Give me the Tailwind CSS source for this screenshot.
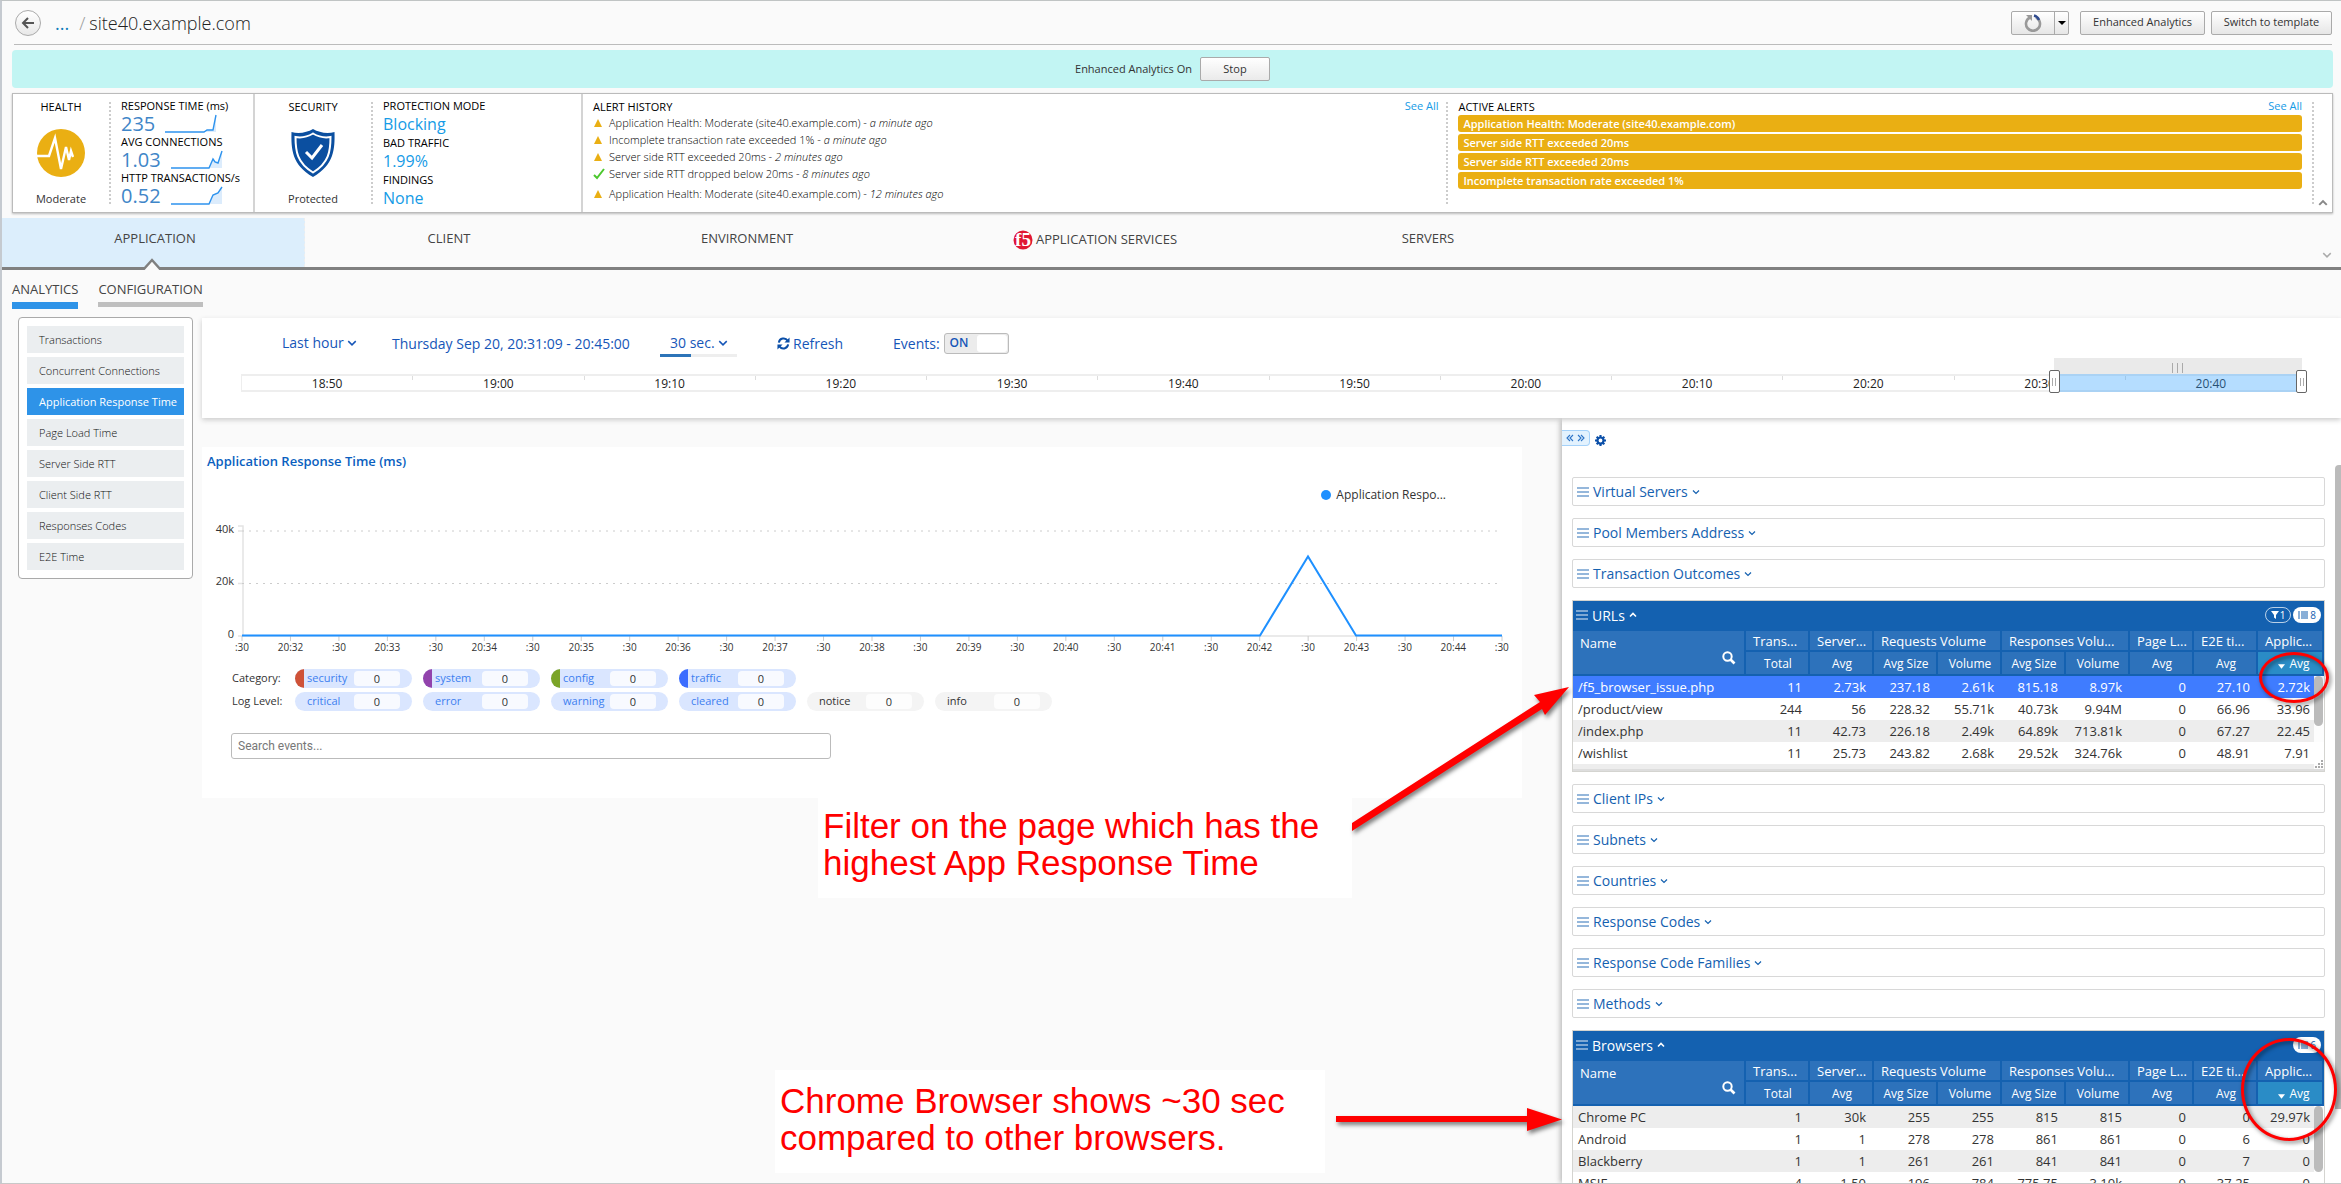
<!DOCTYPE html>
<html lang="en">
<head>
<meta charset="utf-8">
<title>site40.example.com</title>
<script src="https://cdn.jsdelivr.net/npm/@tailwindcss/browser@4"></script>
</head>
<body class="font-['Open_Sans',sans-serif] bg-[#fafafa] text-[#333]">
<svg class="hidden">
  <symbol id="down" viewBox="0 0 8 8"><path d="M1 2.5 4 5.5 7 2.5" fill="none" stroke="currentColor" stroke-width="1.2"/></symbol>
  <symbol id="up" viewBox="0 0 8 8"><path d="M1 5.5 4 2.5 7 5.5" fill="none" stroke="currentColor" stroke-width="1.6"/></symbol>
  <symbol id="bars" viewBox="0 0 12 10"><path d="M0 1h12M0 5h12M0 9h12" stroke="currentColor" stroke-width="1.7"/></symbol>
  <symbol id="search" viewBox="0 0 14 14"><circle cx="5.5" cy="5.5" r="4.2" fill="none" stroke="currentColor" stroke-width="2"/><path d="M8.5 8.5 12.5 12.5" stroke="currentColor" stroke-width="2.6"/></symbol>
  <symbol id="list" viewBox="0 0 10 8"><path d="M0 1h2M3 1h7M0 3h2M3 3h7M0 5h2M3 5h7M0 7h2M3 7h7" stroke="currentColor" stroke-width="1.2"/></symbol>
</svg>

<div class="relative h-screen flex flex-col overflow-hidden border-t border-b border-t-[#c0c4c4] border-b-[#c8c8c8] border-l-2 border-l-[#c5cad0]">

  <header class="ml-3 mr-[9px] h-[44px] shrink-0 flex items-center border-b border-[#bbb]">
    <button aria-label="Back" class="ml-px size-[26px] rounded-full border border-[#aaa] bg-gradient-to-b from-white to-[#e8e8e8] flex items-center justify-center">
      <svg class="size-[14px]" viewBox="0 0 14 14"><path d="M13 7H2M7 2 2 7l5 5" fill="none" stroke="#555" stroke-width="2"/></svg>
    </button>
    <a href="#" class="ml-[14px] text-[18px] leading-6 text-[#0f7cba]">...</a>
    <span class="ml-[10px] text-[18px] leading-6 font-light text-[#999]">/</span>
    <h1 class="ml-1 text-[18px] leading-6 font-light text-[#222]">site40.example.com</h1>
    <div class="ml-auto flex items-center">
      <div class="flex h-6 border border-[#aaa] rounded-[2px] bg-gradient-to-b from-white to-[#e6e6e6]">
        <button aria-label="Refresh" class="w-[43px] flex items-center justify-center border-r border-[#aaa]">
          <svg class="size-[18px]" viewBox="0 0 18 18"><path d="M6 3.5A7 7 0 1 0 12 3.5" fill="none" stroke="#999" stroke-width="2.6"/><path d="M10 1.5A7.5 7.5 0 0 1 15 6" fill="none" stroke="#2f4b8f" stroke-width="2.4"/><path d="M2 1h6v6z" fill="#999"/></svg>
        </button>
        <button aria-label="Refresh options" class="w-[13px] flex items-center justify-center">
          <svg class="w-2 h-1" viewBox="0 0 8 4"><path d="M0 0h8L4 4z" fill="#000"/></svg>
        </button>
      </div>
      <button class="ml-[11px] w-[125px] h-6 border border-[#aaa] rounded-[2px] bg-gradient-to-b from-white to-[#e6e6e6] text-[11px]">Enhanced Analytics</button>
      <button class="ml-[6px] w-[121px] h-6 border border-[#aaa] rounded-[2px] bg-gradient-to-b from-white to-[#e6e6e6] text-[11px]">Switch to template</button>
    </div>
  </header>

  <section class="mt-[5px] ml-[10px] mr-2 h-[38px] shrink-0 rounded bg-[#c2f5f3] flex items-center justify-center gap-2 text-[11px]">
    <span>Enhanced Analytics On</span>
    <button class="w-[70px] h-6 border border-[#aaa] rounded-[2px] bg-gradient-to-b from-white to-[#eaeaea]">Stop</button>
  </section>

  <section class="mt-[5px] ml-[10px] mr-2 h-[120px] shrink-0 flex bg-white border border-[#bbb] shadow-[0_1px_2px_#bbb] text-black">
    <div class="w-[242px] flex border-r-2 border-[#d4d4d4]">
      <div class="w-[98px] my-2 border-r-2 border-dotted border-[#ccc] flex flex-col items-center justify-between text-[11px]">
        <h2 class="leading-[10px]">HEALTH</h2>
        <svg class="size-12" viewBox="0 0 48 48"><circle cx="24" cy="24" r="24" fill="#eaaf13"/><path d="M0 27h12L18 9l6 31 5-22 3 13 2-9 2 6" fill="none" stroke="#fff" stroke-width="2.4"/></svg>
        <span class="leading-[10px] text-[#333]">Moderate</span>
      </div>
      <div class="pl-[10px] pt-[6px] text-[11px]" id="metrics"></div>
    </div>
    <div class="w-[328px] flex border-r-2 border-[#d4d4d4]">
      <div class="w-[118px] my-2 border-r-2 border-dotted border-[#ccc] flex flex-col items-center justify-between text-[11px]">
        <h2 class="leading-[10px]">SECURITY</h2>
        <svg class="w-11 h-12" viewBox="0 0 44 48"><path d="M22 0C16 3.500 8 5 0.500 3 0 20 1 36 22 48 43 36 44 20 43.500 3 36 5 28 3.500 22 0z" fill="#0b4fa0"/><path d="M22 4.500C17 7.500 10 9 4.500 8 4.500 22 6 34 22 43.500 38 34 39.500 22 39.500 8 34 9 27 7.500 22 4.500z" fill="none" stroke="#fff" stroke-width="2"/><path d="m15 23 6 6L31 16" fill="none" stroke="#fff" stroke-width="3"/></svg>
        <span class="leading-[10px] text-[#333]">Protected</span>
      </div>
      <dl class="pl-[10px] pt-[5px] text-[11px]">
        <dt class="leading-[14px]">PROTECTION MODE</dt><dd class="h-[23px] leading-[22px] text-[16px] text-[#159be6]">Blocking</dd>
        <dt class="leading-[14px]">BAD TRAFFIC</dt><dd class="h-[23px] leading-[22px] text-[16px] text-[#159be6]">1.99%</dd>
        <dt class="leading-[14px]">FINDINGS</dt><dd class="h-[23px] leading-[22px] text-[16px] text-[#159be6]">None</dd>
      </dl>
    </div>
    <div class="flex-[867] my-2 border-r-2 border-dotted border-[#ccc] pl-[10px] pr-2 text-[11px]">
      <div class="flex justify-between"><h2 class="leading-[10px]">ALERT HISTORY</h2><a href="#" class="leading-[8px] text-[#159be6]">See All</a></div>
      <ul id="history" class="mt-[2px] font-light"></ul>
    </div>
    <div class="flex-[865] my-2 border-r-2 border-dotted border-[#ccc] pl-[10px] pr-[10px] text-[11px]">
      <div class="flex justify-between h-3"><h2 class="leading-[10px]">ACTIVE ALERTS</h2><a href="#" class="leading-[8px] text-[#159be6]">See All</a></div>
      <ul id="alerts" class="mt-px flex flex-col gap-[2px] text-white font-semibold"></ul>
    </div>
    <button aria-label="Collapse" class="w-[18px] flex items-end justify-center pb-1 text-[#888]"><svg class="size-[10px]"><use href="#up"/></svg></button>
  </section>

  <nav class="mt-[5px] h-[52px] shrink-0 flex items-stretch border-b-[3px] border-[#808080] text-[13px] text-[#444]">
    <a href="#" class="relative w-[303px] bg-[#dceefc] border-r border-dashed border-[#eee] flex items-center justify-center pb-2 pl-1">APPLICATION
      <svg class="absolute left-[140px] -bottom-[3px] w-5 h-3" viewBox="0 0 20 12"><path d="M1 12 10 2l9 10" fill="#fafafa" stroke="#808080" stroke-width="2.500"/></svg></a>
    <a href="#" class="w-[288px] flex items-center justify-center pb-2">CLIENT</a>
    <a href="#" class="w-[308px] flex items-center justify-center pb-2">ENVIRONMENT</a>
    <a href="#" class="w-[388px] flex items-center justify-center gap-[3px] pb-[6px]"><svg class="size-5" viewBox="0 0 20 20"><circle cx="10" cy="10" r="9.500" fill="#e01733"/><text x="10" y="16" text-anchor="middle" font-family="Liberation Serif" font-weight="bold" font-size="19" fill="#fff">f5</text></svg>APPLICATION SERVICES</a>
    <a href="#" class="w-[278px] flex items-center justify-center pb-2">SERVERS</a>
    <button aria-label="More" class="ml-auto mr-[9px] mt-6 text-[#aaa]"><svg class="size-[10px]"><use href="#down"/></svg></button>
  </nav>

  <nav class="h-[47px] shrink-0 pl-[10px] pt-[10px] flex items-start gap-5 text-[13px] leading-[18px] text-[#444]">
    <a href="#" class="border-b-[7px] border-[#2e93e8] pb-1">ANALYTICS</a>
    <a href="#" class="border-b-[5px] border-[#bfbfbf] pb-1">CONFIGURATION</a>
  </nav>

  <div class="flex-1 min-h-0 flex">
    <aside class="w-[200px] shrink-0 pl-4 pr-[9px]">
      <ul id="menu" class="rounded border border-[#aaa] bg-white px-2 py-2 flex flex-col gap-1 text-[11px] font-light text-[#111]"></ul>
    </aside>
    <main class="flex-1 min-w-0 flex flex-col">
      <section class="relative z-10 mt-px h-[100px] shrink-0 bg-white shadow-[0_2px_5px_#ccc] text-[#1656b8] text-[14px]">
        <div class="h-[50px] pl-20 flex items-center">
          <label class="relative flex items-center w-[110px]"><span class="sr-only">Range</span><select class="appearance-none w-[82px] h-7 bg-transparent leading-7"><option>Last hour</option></select><svg class="absolute left-[65px] size-[10px]"><use href="#down"/></svg></label>
          <span class="w-[268px]">Thursday Sep 20, 20:31:09 - 20:45:00</span>
          <label class="relative flex items-center h-7 w-[77px] pl-[10px]"><span class="sr-only">Interval</span><select class="appearance-none w-[67px] h-7 bg-transparent leading-7"><option>30 sec.</option></select><svg class="absolute left-[58px] size-[10px]"><use href="#down"/></svg><span class="absolute left-0 bottom-0 h-[3px] w-full bg-[#eee]"><span class="block h-full w-[31px] bg-[#2d74b8]"></span></span></label>
          <button class="ml-10 flex items-center gap-[3px] w-[116px]"><svg class="size-[13px]" viewBox="0 0 14 14"><path d="M2 6A5.200 5.200 0 0 1 11.500 4M12 8A5.200 5.200 0 0 1 2.500 10" fill="none" stroke="#0b4fa8" stroke-width="2.200"/><path d="M13.500 0.500v5.500H8zM.5 13.500V8H6z" fill="#0b4fa8"/></svg>Refresh</button>
          <label class="flex items-center gap-1">Events:
            <input type="checkbox" checked class="sr-only"><span class="w-[65px] h-[21px] rounded-[3px] border border-[#bbb] bg-[#ececec] flex items-center justify-between pl-[5px] pr-px text-[12px] font-semibold">ON<span class="w-[30px] h-[17px] rounded-[3px] bg-white"></span></span>
          </label>
        </div>
        <div class="relative ml-[39px] mr-[39px] mt-[6px] h-[18px] border border-[#eee] border-y-2 pr-1">
          <div id="timeline" class="flex h-full text-[12px] leading-4 text-[#222]"></div>
          <div class="absolute left-[88%] -right-px -top-[18px] h-[34px]">
            <div class="h-4 bg-[#eaeaea] flex items-center justify-center gap-1 pt-1"><i class="h-[10px] w-px bg-[#aaa]"></i><i class="h-[10px] w-px bg-[#aaa]"></i><i class="h-[10px] w-px bg-[#aaa]"></i></div>
            <div class="h-[18px] bg-[#36a3ff]/37"></div>
            <div class="absolute -left-[5px] top-3 w-[11px] h-[23px] rounded-[2px] border border-[#666] bg-white flex items-center justify-center gap-[2px]"><i class="h-2 w-px bg-[#aaa]"></i><i class="h-2 w-px bg-[#aaa]"></i></div>
            <div class="absolute -right-[5px] top-3 w-[11px] h-[23px] rounded-[2px] border border-[#666] bg-white flex items-center justify-center gap-[2px]"><i class="h-2 w-px bg-[#aaa]"></i><i class="h-2 w-px bg-[#aaa]"></i></div>
          </div>
        </div>
      </section>

      <div class="flex-1 min-h-0 flex">
        <div class="flex-1 min-w-0 pt-[29px] pr-10">
          <section class="h-[351px] bg-white">
            <h2 class="pl-[5px] pt-[5px] text-[13px] leading-[18px] font-semibold text-[#0a5fc0]">Application Response Time (ms)</h2>
            <div class="mt-4 pr-[76px] flex justify-end items-center gap-[5px] text-[12px] leading-[18px]"><i class="size-[10px] rounded-full bg-[#1e90ff]"></i>Application Respo...</div>
            <div class="mt-[21px] flex pr-5">
              <div class="w-10 pr-2 text-[11px] leading-4 text-right flex flex-col"><span class="-mt-1 h-[52px]">40k</span><span class="h-[53px]">20k</span><span class="h-4">0</span></div>
              <div class="flex-1">
                <svg class="block w-full h-[116px] overflow-visible" viewBox="0 0 1260 116" preserveAspectRatio="none">
                  <path d="M-4 1H1V111M-4 6H0M-4 58.500H0M-4 111H1260" fill="none" stroke="#e4e4e4" stroke-width="1.500"/>
                  <path d="M0 6H1260M0 58.500H1260" stroke="#ccc" stroke-dasharray="2 5"/>
                  <path id="ticks" fill="none" stroke="#ccc"/>
                  <path d="M0 110.500H1018L1066 31.500 1114 110.500H1260" fill="none" stroke="#1e90ff" stroke-width="2"/>
                </svg>
                <div id="xaxis" class="-mt-px flex justify-between text-[10px] leading-[14px]"></div>
              </div>
            </div>
            <div id="pills" class="pl-[30px] mt-[15px] flex flex-col gap-1 text-[11px]"></div>
            <input type="text" aria-label="Search events" placeholder="Search events..." class="block ml-[29px] mt-[22px] w-[600px] h-[26px] rounded-[3px] border border-[#bbb] px-[6px] font-['Roboto',sans-serif] text-[12px] placeholder:text-[#777]">
          </section>
        </div>

        <aside class="relative w-[779px] shrink-0 bg-white shadow-[-2px_0_5px_#bbb] pl-[10px] pr-4">
          <div class="-ml-[10px] pt-3 h-[59px] flex items-start gap-[5px] text-[#0b4fa8]">
            <button aria-label="Resize panel" class="w-7 h-4 rounded-r border border-l-0 border-[#a5d2fa] bg-[#e3f2fe] flex items-center justify-center"><svg class="w-[19px] h-2" viewBox="0 0 19 8"><path d="M4 1 1 4l3 3M7 1 4 4l3 3M12 1l3 3-3 3M15 1l3 3-3 3" fill="none" stroke="#2d74c8" stroke-width="1.100"/></svg></button>
            <button aria-label="Settings" class="mt-[5px]"><svg class="size-[11px]" viewBox="0 0 12 12"><path d="M6 0v12M0 6h12M1.800 1.800l8.400 8.400M10.200 1.800l-8.400 8.400" stroke="currentColor" stroke-width="2.300"/><circle cx="6" cy="6" r="3.300" fill="#fff" stroke="currentColor" stroke-width="2.400"/></svg></button>
          </div>
          <div id="panels" class="flex flex-col gap-3"></div>
          <div class="absolute right-0 top-[47px] w-[6px] h-[644px] rounded-tl bg-[#bbb]"></div>
        </aside>
      </div>
    </main>
  </div>

  <!-- Annotations over the dashboard -->
  <p class="absolute left-[816px] top-[797px] w-[534px] h-[100px] bg-white pl-[5px] pt-[9px] font-['Liberation_Sans',sans-serif] text-[35px] leading-[37px] whitespace-nowrap text-[#f00]">Filter on the page which has the<br>highest App Response Time</p>
  <p class="absolute left-[773px] top-[1069px] w-[550px] h-[103px] bg-white pl-[5px] pt-3 font-['Liberation_Sans',sans-serif] text-[35px] leading-[37px] whitespace-nowrap text-[#f00]">Chrome Browser shows ~30 sec<br>compared to other browsers.</p>
  <svg class="absolute right-[761px] top-[679px] z-20 w-[228px] h-[160px] drop-shadow-[2px_3px_2px_rgba(0,0,0,0.5)]" viewBox="0 0 228 160"><path d="M0 143 188 22 182 15 217 7 193 35 190 29 0 151z" fill="#f00"/></svg>
  <svg class="absolute right-[775px] top-[1104px] z-20 w-[230px] h-[32px] drop-shadow-[2px_3px_2px_rgba(0,0,0,0.5)]" viewBox="0 0 230 32"><path d="M0 11H191V3L226 14.500 191 26V17H0z" fill="#f00"/></svg>
  <div class="absolute right-[12px] top-[651px] z-20 w-[70px] h-[51px] rounded-[50%] border-[3px] border-[#f00] drop-shadow-[2px_2px_2px_rgba(0,0,0,0.5)]"></div>
  <div class="absolute right-[4px] top-[1037px] z-20 w-[96px] h-[103px] rounded-[50%] border-[3px] border-[#f00] drop-shadow-[2px_2px_2px_rgba(0,0,0,0.5)]"></div>
</div>

<script>
const $ = id => document.getElementById(id);
const use = (n, c) => `<svg class="${c}"><use href="#${n}"/></svg>`;

$('metrics').innerHTML = [
  ['RESPONSE TIME (ms)', '235', 'M0 18H39L42 16H48L51 1'],
  ['AVG CONNECTIONS', '1.03', 'M0 18H38L42 9 44 12 47 13 51 1'],
  ['HTTP TRANSACTIONS/s', '0.52', 'M0 18H38L42 9 47 7 51 1']
].map(([l, v, d]) => `<div class="h-9"><div class="leading-3">${l}</div><div class="flex items-center gap-[10px] h-6"><span class="text-[20px] leading-6 text-[#3f86c8]">${v}</span><svg class="w-[52px] h-5" viewBox="0 0 52 20"><path d="${d}V18H38z" fill="#dcecfc"/><path d="${d}" fill="none" stroke="#2e93ee" stroke-width="1.4"/></svg></div></div>`).join('');

$('history').innerHTML = [
  ['Application Health: Moderate (site40.example.com)', 'a minute ago', 0],
  ['Incomplete transaction rate exceeded 1%', 'a minute ago', 0],
  ['Server side RTT exceeded 20ms', '2 minutes ago', 0],
  ['Server side RTT dropped below 20ms', '8 minutes ago', 1],
  ['Application Health: Moderate (site40.example.com)', '12 minutes ago', 0]
].map(([t, a, ok]) => `<li class="flex items-center gap-1 leading-[17px] ${ok ? 'mb-[3px]' : ''}">${ok
  ? '<svg class="w-3 h-3" viewBox="0 0 12 12"><path d="M1 7l3 3L11 1" fill="none" stroke="#4cc82e" stroke-width="2"/></svg>'
  : '<svg class="w-3 h-3" viewBox="0 0 12 12"><path d="M5 2 9 10H1z" fill="#eaaf13"/></svg>'}<span>${t} - <em>${a}</em></span></li>`).join('');

$('alerts').innerHTML = ['Application Health: Moderate (site40.example.com)', 'Server side RTT exceeded 20ms', 'Server side RTT exceeded 20ms', 'Incomplete transaction rate exceeded 1%']
  .map(t => `<li class="h-[17px] rounded-[3px] bg-[#eaaf13] pl-[5px] leading-[17px]">${t}</li>`).join('');

$('menu').innerHTML = ['Transactions', 'Concurrent Connections', 'Application Response Time', 'Page Load Time', 'Server Side RTT', 'Client Side RTT', 'Responses Codes', 'E2E Time']
  .map((t, i) => `<li><a href="#" class="block h-[27px] leading-[27px] pl-3 whitespace-nowrap ${i === 2 ? 'bg-[#2e93e8] text-white font-normal' : 'bg-[#ebeef0]'}">${t}</a></li>`).join('');

$('timeline').innerHTML = ['18:50', '19:00', '19:10', '19:20', '19:30', '19:40', '19:50', '20:00', '20:10', '20:20', '20:30', '20:40']
  .map(t => `<div class="flex-1 text-center flex"><span class="flex-1">${t}</span><i class="w-px h-1 bg-[#ddd]"></i></div>`).join('');

let ticks = '', labels = '';
for (let i = 0; i <= 26; i++) {
  ticks += `M${i * 1260 / 26} 111v5`;
  labels += `<span class="w-0 flex justify-center whitespace-nowrap"><span>${i % 2 ? '20:' + (32 + (i - 1) / 2) : ':30'}</span></span>`;
}
$('ticks').setAttribute('d', ticks);
$('xaxis').innerHTML = labels;

const pill = ([t, c]) => `<button class="w-[117px] h-[19px] rounded-full overflow-hidden flex items-center text-left ${c === 'off' ? 'bg-[#f4f4f4] text-[#333]' : 'bg-[#dae6ff] text-[#3d7ff0]'}"><i class="w-[9px] h-full ${c}"></i><span class="w-[50px] pl-[3px]">${t}</span><span class="w-[46px] h-[15px] rounded bg-white/80 text-center leading-[15px] text-[#333]">0</span></button>`;
$('pills').innerHTML = [
  ['Category:', [['security', 'bg-[#cf5238]'], ['system', 'bg-[#9243ac]'], ['config', 'bg-[#7ba428]'], ['traffic', 'bg-[#3a6cff]']]],
  ['Log Level:', [['critical', ''], ['error', ''], ['warning', ''], ['cleared', ''], ['notice', 'off'], ['info', 'off']]]
].map(([l, p]) => `<div class="flex items-center gap-[11px] h-[19px]"><span class="w-[52px]">${l}</span>${p.map(pill).join('')}</div>`).join('');

const closed = t => `<button class="h-[29px] w-full border border-[#d8d8d8] rounded-[2px] bg-white flex items-center gap-1 pl-1 text-[14px] text-[#1461b0]">${use('bars', 'w-3 h-[10px] text-[#1461b0]/60')}${t}${use('down', 'size-2')}</button>`;
const th = 'bg-[#2d72bb] border-b-2 border-r-2 border-[#1461b0] font-normal';
const grid = (name, filter, count, rows, selected, h) => `<section class="relative shrink-0 w-full overflow-hidden border border-[#d4d4d0] ${h}">
  <div class="h-[30px] bg-[#1461b0] text-white flex items-center pl-[3px] pr-[3px] pb-[2px] gap-1 text-[14px]">
    ${use('bars', 'w-3 h-[10px] text-white/60')}<span>${name}</span>${use('up', 'size-2')}
    <span class="ml-auto"></span>${filter ? `<span class="h-4 w-[26px] rounded-full border border-white/70 flex items-center justify-center gap-px text-[10px]"><svg class="size-2" viewBox="0 0 8 8"><path d="M0 0h8L5 4v4L3 6.500V4z" fill="#fff"/></svg>${filter}</span>` : ''}
    <span class="-ml-[2px] h-4 w-7 rounded-full bg-white text-[#1461b0] flex items-center justify-center gap-[2px] text-[10px]">${use('list', 'w-[10px] h-2')}${count}</span>
  </div>
  <table class="table-fixed w-full border-separate border-spacing-0 text-[13px]">
    <colgroup><col>${'<col class="w-16">'.repeat(8)}<col class="w-[66px]"></colgroup>
    <thead class="text-white leading-[18px]">
      <tr class="h-[21px]"><th rowspan="2" class="${th} text-left align-top pl-[7px] pt-[3px] pr-2">Name<div class="flex justify-end -mt-px">${use('search', 'size-[14px]')}</div></th>
      ${[['Trans...', 1], ['Server...', 1], ['Requests Volume', 2], ['Responses Volu...', 2], ['Page L...', 1], ['E2E ti...', 1], ['Applic...', 1]].map(([t, s]) => `<th colspan="${s}" class="${th} text-left pl-[7px] whitespace-nowrap">${t}</th>`).join('')}</tr>
      <tr class="h-[23px]">${['Total', 'Avg', 'Avg Size', 'Volume', 'Avg Size', 'Volume', 'Avg', 'Avg'].map(t => `<th class="${th} pt-[3px] pl-[2px] text-[12px] text-center">${t}</th>`).join('')}<th class="border-b-2 border-r-2 border-[#1461b0] font-normal pt-[3px] text-[12px] text-center bg-[#2a8cc6]"><span class="inline-flex items-center gap-1 pl-2"><svg class="w-[7px] h-[5px] mt-1" viewBox="0 0 8 5"><path d="M0 0h8L4 5z" fill="#fff"/></svg>Avg</span></th></tr>
    </thead>
    <tbody class="leading-[22px]">${rows.map((r, i) => `<tr class="${i === selected ? 'bg-[#3f7cff] text-white' : i % 2 ? 'bg-white' : 'bg-[#ededed]'}">${r.map((c, j) => `<td class="h-[22px] ${j === 0 ? 'pl-[5px] text-left' : j === 9 ? 'pr-[14px] text-right' : 'pr-2 text-right'}">${c}</td>`).join('')}</tr>`).join('')}</tbody>
  </table>
  <div class="absolute right-0 top-[75px] bottom-0 w-[10px] bg-white/90"><div class="w-[9px] rounded-full bg-[#bbb] ${selected === 0 ? 'h-[50px]' : 'h-[66px]'}"></div></div>
  ${selected === 0 ? '<div class="absolute inset-x-0 bottom-0 h-[2px] bg-[#ddd]"></div><svg class="absolute right-px bottom-[3px] size-2" viewBox="0 0 8 8"><path d="M0 7h2M3 7h2M6 7h2M3 4h2M6 4h2M6 1h2" stroke="#aaa" stroke-width="2"/></svg>' : ''}
</section>`;

$('panels').innerHTML = ['Virtual Servers', 'Pool Members Address', 'Transaction Outcomes'].map(closed).join('')
 + grid('URLs', '1', '8', [
  ['/f5_browser_issue.php', '11', '2.73k', '237.18', '2.61k', '815.18', '8.97k', '0', '27.10', '2.72k'],
  ['/product/view', '244', '56', '228.32', '55.71k', '40.73k', '9.94M', '0', '66.96', '33.96'],
  ['/index.php', '11', '42.73', '226.18', '2.49k', '64.89k', '713.81k', '0', '67.27', '22.45'],
  ['/wishlist', '11', '25.73', '243.82', '2.68k', '29.52k', '324.76k', '0', '48.91', '7.91'],
  ['', '', '', '', '', '', '', '', '', '']], 0, 'h-[172px]')
 + ['Client IPs', 'Subnets', 'Countries', 'Response Codes', 'Response Code Families', 'Methods'].map(closed).join('')
 + grid('Browsers', '', '6', [
  ['Chrome PC', '1', '30k', '255', '255', '815', '815', '0', '0', '29.97k'],
  ['Android', '1', '1', '278', '278', '861', '861', '0', '6', '0'],
  ['Blackberry', '1', '1', '261', '261', '841', '841', '0', '7', '0'],
  ['MSIE', '4', '1.50', '196', '784', '775.75', '3.10k', '0', '37.25', '0']], -1, 'h-[172px]');
</script>
</body>
</html>
